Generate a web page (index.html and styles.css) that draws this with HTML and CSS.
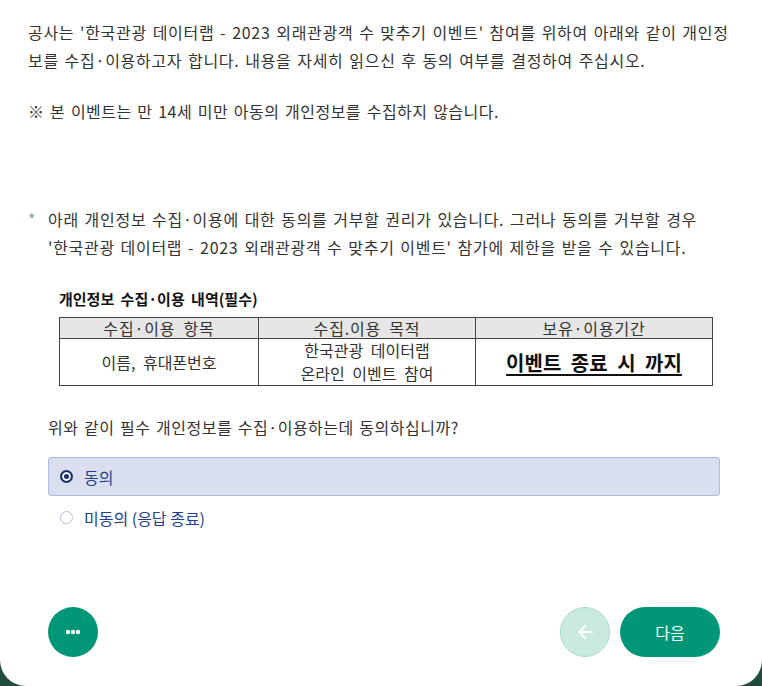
FILE: index.html
```html
<html>

<head>
    <title>개인정보 수집 동의</title>
    <link rel="stylesheet" href="styles.css">
</head>

<body>
    <div class="card">
        <div class="content">
            <p class="intro">공사는 '한국관광 데이터랩 - 2023 외래관광객 수 맞추기 이벤트' 참여를 위하여 아래와 같이 개인정보를 수집·이용하고자 합니다. 내용을 자세히 읽으신 후 동의 여부를 결정하여 주십시오.</p>
            <p class="notice">※ 본 이벤트는 만 14세 미만 아동의 개인정보를 수집하지 않습니다.</p>

            <p class="note"><span class="star">*</span>아래 개인정보 수집·이용에 대한 동의를 거부할 권리가 있습니다. 그러나 동의를 거부할 경우 '한국관광 데이터랩 - 2023 외래관광객 수 맞추기 이벤트' 참가에 제한을 받을 수 있습니다.</p>

            <div class="detail">
                <h3>개인정보 수집·이용 내역(필수)</h3>
                <table class="info">
                    <tr>
                        <th class="col1">수집·이용 항목</th>
                        <th class="col2">수집.이용 목적</th>
                        <th>보유·이용기간</th>
                    </tr>
                    <tr>
                        <td>이름, 휴대폰번호</td>
                        <td><div class="purpose">한국관광 데이터랩<br>온라인 이벤트 참여</div></td>
                        <td class="period">이벤트 종료 시 까지</td>
                    </tr>
                </table>
            </div>

            <p class="question">위와 같이 필수 개인정보를 수집·이용하는데 동의하십니까?</p>

            <div class="options">
                <label class="option selected"><span class="radio"></span>동의</label>
                <label class="option"><span class="radio"></span>미동의 (응답 종료)</label>
            </div>
        </div>

        <div class="footer">
            <button class="round more">
                <svg width="16" height="6" viewBox="0 0 16 6"><circle cx="3" cy="3" r="2.2" fill="#fff"/><circle cx="8" cy="3" r="2.2" fill="#fff"/><circle cx="13" cy="3" r="2.2" fill="#fff"/></svg>
            </button>
            <div class="nav">
                <button class="round back">
                    <svg width="18" height="18" viewBox="0 0 18 18"><path d="M16 9H3M9 3L3 9l6 6" stroke="#fff" stroke-width="2" fill="none" stroke-linecap="round" stroke-linejoin="round"/></svg>
                </button>
                <button class="next">다음</button>
            </div>
        </div>
    </div>
</body>

</html>
```

FILE: styles.css
```css
body {
    margin: 0;
    background-color: #1f4c3d;
    font-family: "Noto Sans CJK KR", "Noto Sans", sans-serif;
    color: #333;
}

.card {
    height: 686px;
    background-color: white;
    border-radius: 0 0 26px 26px;
    display: flex;
    flex-direction: column;
    justify-content: space-between;
}

.content {
    padding: 18px 28px 0 28px;
}

p {
    margin: 0;
    font-size: 16px;
    line-height: 28px;
    letter-spacing: 0.7px;
    word-spacing: 1.5px;
}

.notice {
    margin-top: 23px;
    letter-spacing: 0.5px;
}

.note {
    margin-top: 80px;
    padding-left: 20px;
    padding-right: 20px;
    text-indent: -20px;
}

.star {
    display: inline-block;
    width: 20px;
    text-indent: 0;
    color: #999;
}

.detail {
    margin-top: 28px;
    padding-left: 31px;
    padding-right: 21px;
}

h3 {
    margin: 0 0 8px 0;
    font-size: 15px;
    line-height: 20px;
    color: #111;
    word-spacing: 3px;
}

.info {
    width: 100%;
    border-collapse: collapse;
    font-size: 16px;
    color: #333;
    word-spacing: 4px;
}

.info th,
.info td {
    border: 1px solid #444;
    text-align: center;
    font-weight: normal;
    padding: 0;
}

.info th {
    background-color: #e6e6e6;
    line-height: 20px;
    letter-spacing: 0.8px;
}

.info td {
    height: 46px;
}

.purpose {
    line-height: 23px;
}

.col1 {
    width: 198px;
}

.col2 {
    width: 216px;
}

.info td.period {
    font-size: 20px;
    font-weight: bold;
    color: #111;
    word-spacing: 5px;
    text-decoration: underline;
    text-underline-offset: 3px;
}

.question {
    margin-top: 27px;
    padding-left: 20px;
    letter-spacing: 0.5px;
}

.options {
    margin-top: 16px;
    padding-left: 20px;
    padding-right: 14px;
}

.option {
    display: flex;
    align-items: center;
    height: 37px;
    padding-left: 11px;
    font-size: 16px;
    color: #22418f;
    border: 1px solid transparent;
    border-radius: 3px;
}

.option.selected {
    background-color: #d9dfee;
    border-color: #aebbdc;
}

.option + .option {
    margin-top: 2px;
}

.radio {
    width: 11px;
    height: 11px;
    border: 1px solid #b7c1dc;
    border-radius: 50%;
    margin-right: 11px;
    background-color: white;
}

.selected .radio {
    width: 9px;
    height: 9px;
    border: 2px solid #1b2f6e;
    background-color: #1b2f6e;
    box-shadow: inset 0 0 0 2px #fff;
}

.footer {
    display: flex;
    justify-content: space-between;
    align-items: center;
    padding: 0 42px 29px 48px;
}

.nav {
    display: flex;
    gap: 10px;
}

button {
    border: none;
    cursor: pointer;
    font-family: "Noto Sans CJK KR", sans-serif;
}

.round {
    width: 50px;
    height: 50px;
    border-radius: 50%;
    display: flex;
    align-items: center;
    justify-content: center;
    padding: 0;
}

.more {
    background-color: #009677;
}

.back {
    background-color: #c9e9e1;
    border: 1px solid #a9dccf;
}

.next {
    width: 100px;
    height: 50px;
    border-radius: 25px;
    background-color: #009677;
    color: white;
    font-size: 16px;
}
```
